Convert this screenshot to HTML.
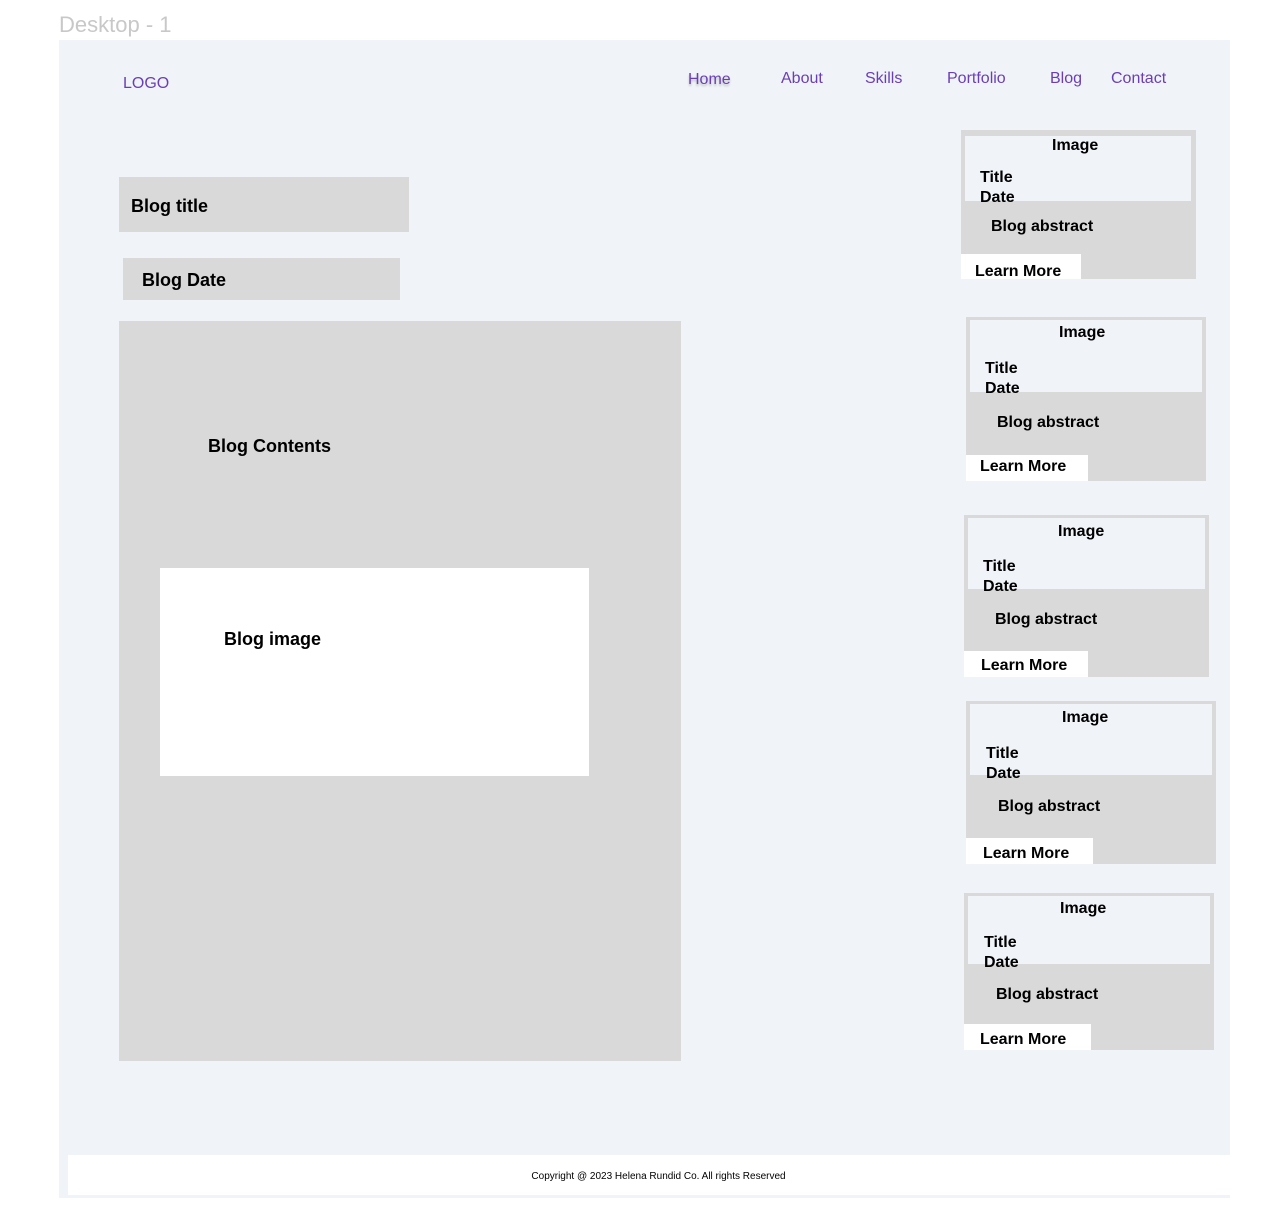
<!DOCTYPE html>
<html><head><meta charset="utf-8"><style>
*{margin:0;padding:0;box-sizing:border-box}
body{width:1264px;height:1222px;background:#fff;position:relative;overflow:hidden;font-family:"Liberation Sans",sans-serif}
.a{position:absolute}
.t{position:absolute;line-height:20px;white-space:nowrap;color:#000;font-weight:bold;font-size:16px;transform:translateY(2px)}
.n{position:absolute;line-height:20px;color:#6a3fb5;font-size:16px;white-space:nowrap;transform:translateY(2px)}
.g{background:#d9d9d9}
.l{background:#f0f3f8}
.w{background:#fff}
</style></head><body>
<div class="a" style="left:59px;top:12px;font-size:22px;color:#c8c8c8;line-height:26px">Desktop - 1</div>
<div class="a l" style="left:59px;top:40px;width:1171px;height:1158px"></div>

<div class="n" style="left:123px;top:72px">LOGO</div>
<div class="n" style="left:688px;top:68px;text-shadow:0 2px 2px rgba(0,0,0,.25)">Home</div>
<div class="n" style="left:781px;top:67px">About</div>
<div class="n" style="left:865px;top:67px">Skills</div>
<div class="n" style="left:947px;top:67px">Portfolio</div>
<div class="n" style="left:1050px;top:67px">Blog</div>
<div class="n" style="left:1111px;top:67px">Contact</div>

<div class="a g" style="left:119px;top:177px;width:290px;height:55px"></div>
<div class="t" style="left:131px;top:194px;font-size:18px">Blog title</div>
<div class="a g" style="left:123px;top:258px;width:277px;height:42px"></div>
<div class="t" style="left:142px;top:268px;font-size:18px">Blog Date</div>

<div class="a g" style="left:119px;top:321px;width:562px;height:740px"></div>
<div class="t" style="left:208px;top:434px;font-size:18px">Blog Contents</div>
<div class="a w" style="left:160px;top:568px;width:429px;height:208px"></div>
<div class="t" style="left:224px;top:627px;font-size:18px">Blog image</div>

<div class="a g" style="left:961px;top:130px;width:235px;height:149px"></div>
<div class="a l" style="left:965px;top:136px;width:226px;height:65px"></div>
<div class="a w" style="left:961px;top:254px;width:120px;height:25px"></div>
<div class="t" style="left:1052px;top:134px">Image</div>
<div class="t" style="left:980px;top:166px">Title</div>
<div class="t" style="left:980px;top:186px">Date</div>
<div class="t" style="left:991px;top:215px">Blog abstract</div>
<div class="t" style="left:975px;top:260px">Learn More</div>

<div class="a g" style="left:966px;top:317px;width:240px;height:164px"></div>
<div class="a l" style="left:970px;top:320px;width:232px;height:72px"></div>
<div class="a w" style="left:966px;top:455px;width:122px;height:26px"></div>
<div class="t" style="left:1059px;top:321px">Image</div>
<div class="t" style="left:985px;top:357px">Title</div>
<div class="t" style="left:985px;top:377px">Date</div>
<div class="t" style="left:997px;top:411px">Blog abstract</div>
<div class="t" style="left:980px;top:455px">Learn More</div>

<div class="a g" style="left:964px;top:515px;width:245px;height:162px"></div>
<div class="a l" style="left:968px;top:518px;width:237px;height:71px"></div>
<div class="a w" style="left:964px;top:651px;width:124px;height:26px"></div>
<div class="t" style="left:1058px;top:520px">Image</div>
<div class="t" style="left:983px;top:555px">Title</div>
<div class="t" style="left:983px;top:575px">Date</div>
<div class="t" style="left:995px;top:608px">Blog abstract</div>
<div class="t" style="left:981px;top:654px">Learn More</div>

<div class="a g" style="left:966px;top:701px;width:250px;height:163px"></div>
<div class="a l" style="left:970px;top:704px;width:242px;height:71px"></div>
<div class="a w" style="left:966px;top:838px;width:127px;height:26px"></div>
<div class="t" style="left:1062px;top:706px">Image</div>
<div class="t" style="left:986px;top:742px">Title</div>
<div class="t" style="left:986px;top:762px">Date</div>
<div class="t" style="left:998px;top:795px">Blog abstract</div>
<div class="t" style="left:983px;top:842px">Learn More</div>

<div class="a g" style="left:964px;top:893px;width:250px;height:157px"></div>
<div class="a l" style="left:968px;top:896px;width:242px;height:68px"></div>
<div class="a w" style="left:964px;top:1024px;width:127px;height:26px"></div>
<div class="t" style="left:1060px;top:897px">Image</div>
<div class="t" style="left:984px;top:931px">Title</div>
<div class="t" style="left:984px;top:951px">Date</div>
<div class="t" style="left:996px;top:983px">Blog abstract</div>
<div class="t" style="left:980px;top:1028px">Learn More</div>

<div class="a w" style="left:68px;top:1155px;width:1162px;height:40px"></div>
<div class="a" style="left:68px;top:1170px;width:1181px;text-align:center;font-size:10px;line-height:14px;color:#000">Copyright @ 2023 Helena Rundid Co. All rights Reserved</div>
</body></html>
